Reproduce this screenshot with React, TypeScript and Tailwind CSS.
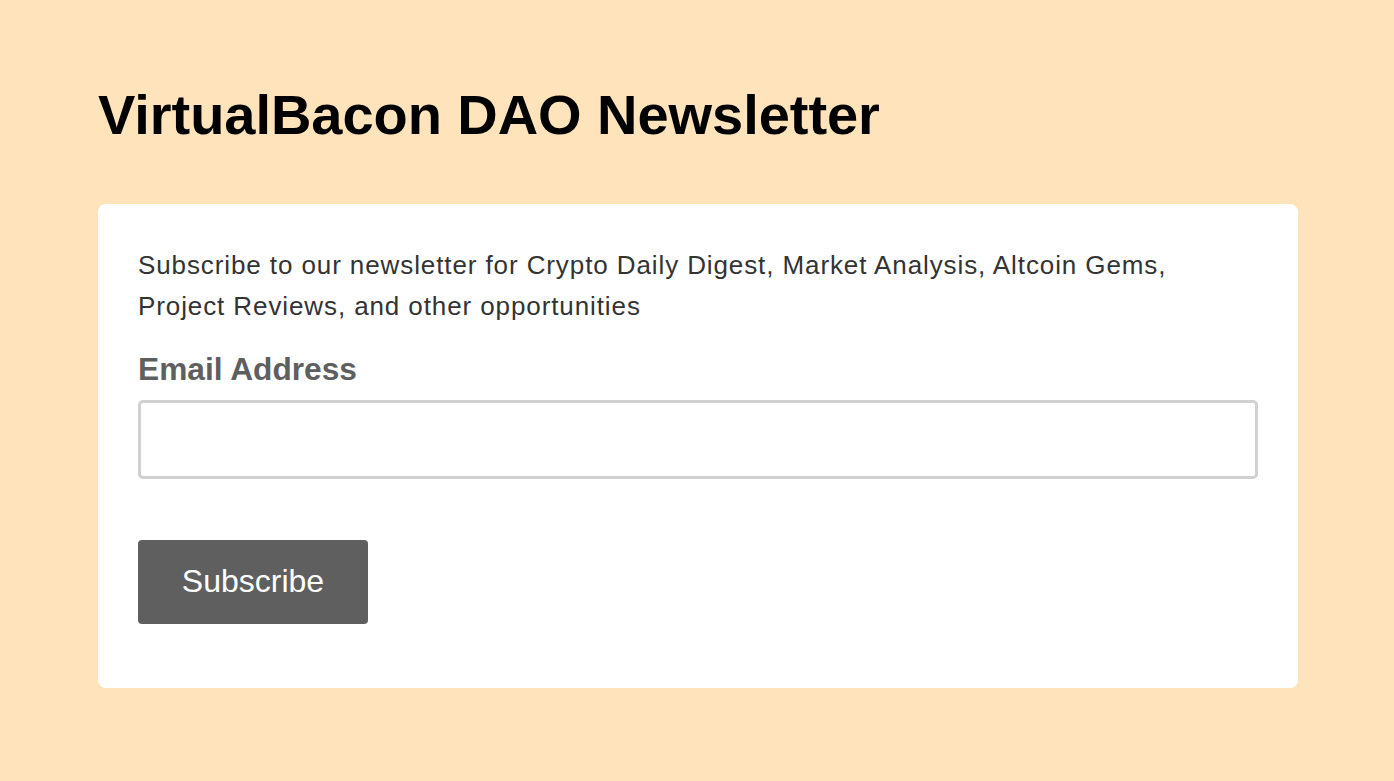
export default function App() {
  return (
    <div
      className="min-h-[781px] w-full bg-[#ffe4bb] pl-[98px] pr-[96px] pt-[81px] pb-[93px]"
      style={{ fontFamily: '"Liberation Sans", Arial, Helvetica, sans-serif' }}
    >
      <h1 className="text-[56px] font-bold leading-[67px] tracking-[-0.05px] text-black">
        VirtualBacon DAO Newsletter
      </h1>

      <div className="mt-[56px] w-[1200px] rounded-[8px] bg-white px-[40px] pt-[40px] pb-[64px]">
        <p className="pt-[1px] text-[26px] leading-[41px] tracking-[0.9px] text-[#333333]">
          Subscribe to our newsletter for Crypto Daily Digest, Market Analysis, Altcoin Gems,
          <br />
          Project Reviews, and other opportunities
        </p>

        <label className="mt-[24px] block text-[31.7px] font-bold leading-[36px] text-[#5f5f5f]">
          Email Address
        </label>
        <input
          type="email"
          className="mt-[13px] block h-[79px] w-[1120px] rounded-[5px] border-[3px] border-[#d1d1d1] bg-white px-4 text-[24px] outline-none"
        />

        <button className="mt-[61px] flex h-[84px] w-[230px] items-center justify-center rounded-[4px] bg-[#5f5f5f] pb-[3px] text-[32px] text-white">
          Subscribe
        </button>
      </div>
    </div>
  );
}
